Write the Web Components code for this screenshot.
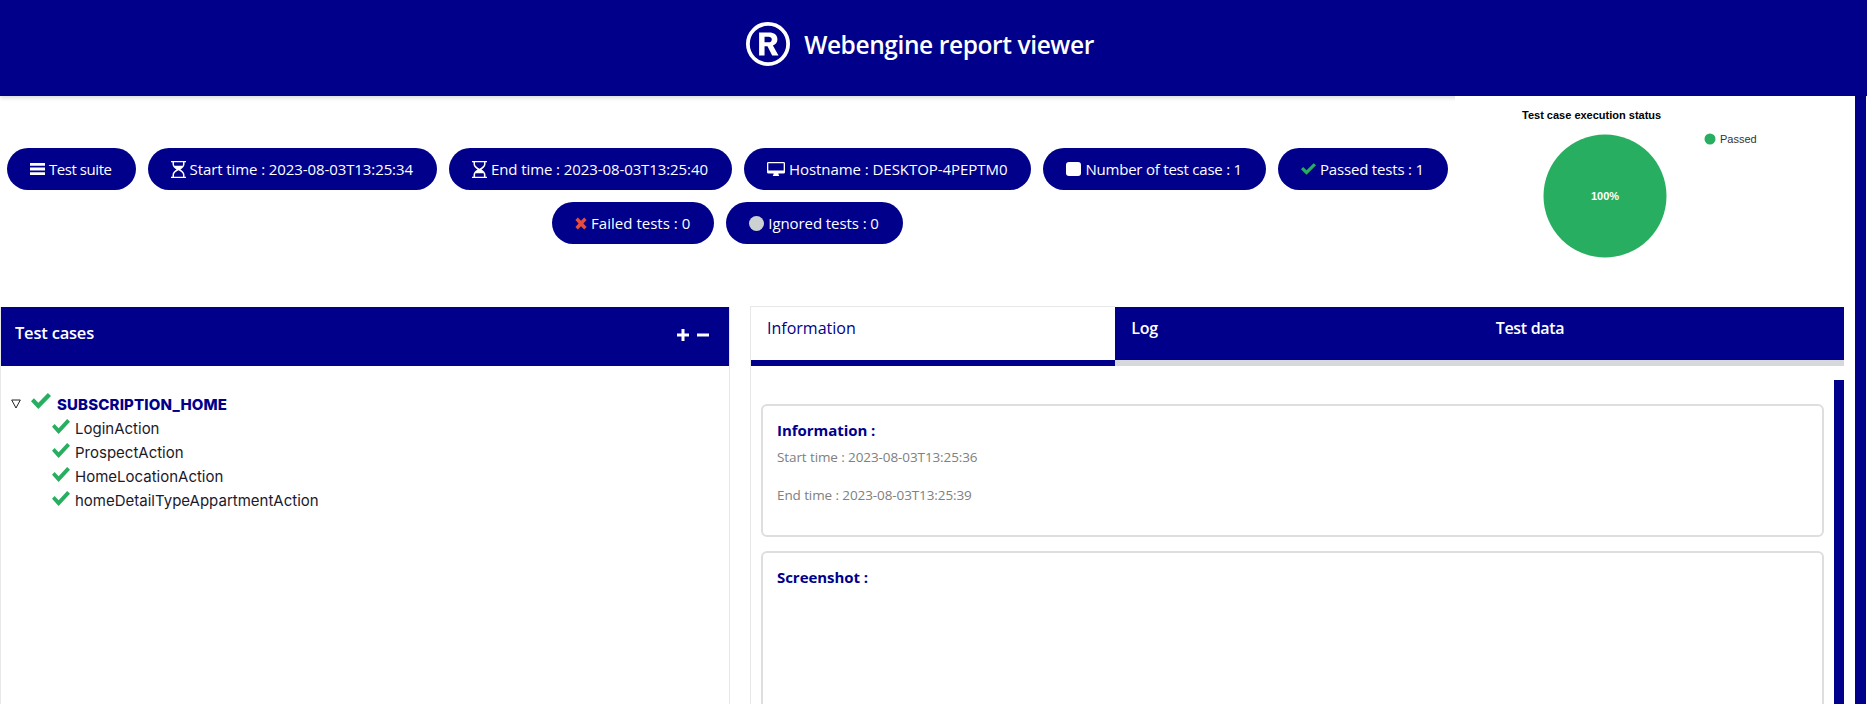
<!DOCTYPE html>
<html>
<head>
<meta charset="utf-8">
<title>Webengine report viewer</title>
<style>
html, body { margin: 0; height: 704px; overflow: hidden; background: #fff; font-family: "Open Sans", "Noto Sans", sans-serif; }
</style>
</head>
<body>
<report-app></report-app>

<script>
const NAVY = '#00008b';

const ICONS = {
    bars: `<svg width="15" height="12" viewBox="0 0 15 12"><path fill="#fff" d="M0 0h15v2.800H0zM0 4.600h15v2.800H0zM0 9.200h15V12H0z"/></svg>`,
    start: `<svg width="15" height="17" viewBox="0 0 14 20" preserveAspectRatio="none"><path fill="#fff" fill-rule="evenodd" d="M0 0h14v1.600h-1.400v2.200c0 2.600-1.900 4.700-3.800 6.200 1.900 1.500 3.800 3.600 3.800 6.200v2.200H14V20H0v-1.600h1.400v-2.200c0-2.600 1.900-4.700 3.800-6.200C3.300 8.500 1.400 6.400 1.400 3.800V1.600H0zM2.800 1.600v2.200c0 .6.100 1.100.3 1.700h7.800c.2-.6.300-1.100.3-1.700V1.600zM7 11c-2.100 1.500-4.200 3.300-4.200 5.200v2.200h8.400v-2.200c0-1.900-2.100-3.700-4.200-5.200z"/></svg>`,
    end: `<svg width="15" height="17" viewBox="0 0 14 20" preserveAspectRatio="none"><path fill="#fff" fill-rule="evenodd" d="M0 0h14v1.600h-1.400v2.200c0 2.600-1.900 4.700-3.800 6.200 1.900 1.500 3.800 3.600 3.800 6.200v2.200H14V20H0v-1.600h1.400v-2.200c0-2.600 1.900-4.700 3.800-6.200C3.300 8.500 1.400 6.400 1.400 3.800V1.600H0zM2.800 1.600v2.200c0 1.900 2.100 3.700 4.200 5.200 2.100-1.500 4.200-3.300 4.200-5.200V1.600zM2.900 18.400h8.200v-2.200c0-.6-.1-1.100-.3-1.700H3.200c-.2.600-.3 1.100-.3 1.700z"/></svg>`,
    desktop: `<svg width="18" height="15" viewBox="0 0 19 17" preserveAspectRatio="none"><path fill="#fff" fill-rule="evenodd" d="M1.500 0h16A1.500 1.500 0 0 1 19 1.500v10a1.500 1.500 0 0 1-1.500 1.500h-5.500c0 1 .4 1.700.8 2.200v.8H6.200v-.8c.4-.5.8-1.200.8-2.200H1.500A1.500 1.500 0 0 1 0 11.500v-10A1.500 1.500 0 0 1 1.500 0zM1.400 1.400v8.200h16.200V1.400z"/></svg>`,
    square: `<svg width="15" height="14" viewBox="0 0 15 14"><rect width="15" height="14" rx="3" fill="#fff"/></svg>`,
    check: `<svg width="15" height="12" viewBox="0 0 18 14"><path fill="#27ae60" d="M0 7.200 2.600 4.600 6.600 8.600 15.200 0 18 2.600 6.600 14z"/></svg>`,
    cross: `<svg width="12" height="13" viewBox="0 0 12 13"><path fill="#e74c3c" d="M2.800.6 6 3.800 9.200.6 11.600 3 8.400 6.500 11.600 10 9.200 12.400 6 9.200 2.800 12.400.4 10 3.600 6.500.4 3z"/></svg>`,
    circle: `<svg width="15" height="15" viewBox="0 0 15 15"><circle cx="7.500" cy="7.500" r="7.500" fill="#ccd1d1"/></svg>`
};

class ReportHeader extends HTMLElement {
    constructor() {
        super();
        this.attachShadow({ mode: 'open' });
        this.shadowRoot.innerHTML = `
        <style>
        :host {
            display: flex;
            align-items: center;
            justify-content: center;
            position: relative;
            height: 96px;
            padding: 0 27px 8px 0;
            box-sizing: border-box;
            background: ${NAVY};
            color: #fff;
            box-shadow: 0 2px 4px rgba(0,0,0,.15);
        }
        .logo {
            width: 44px;
            height: 44px;
            margin-right: 14px;
        }
        h1 {
            margin: 0;
            font: 600 24.500px "Open Sans", sans-serif;
            letter-spacing: -.4px;
        }
        </style>
        <svg class="logo" viewBox="0 0 42 42" aria-hidden="true">
            <circle cx="21" cy="21" r="19.200" fill="none" stroke="#fff" stroke-width="3.600"/>
            <path fill="#fff" fill-rule="evenodd" d="M12.500 10h9.500c5 0 8 2.500 8 6.500 0 3-1.700 5-4.300 5.900L31 32h-6l-4.500-8.800h-2.800V32h-5.200zM17.700 14v5.400h3.600c2 0 3.300-1 3.300-2.800 0-1.700-1.200-2.600-3.300-2.600z"/>
        </svg>
        <h1><slot></slot></h1>`;
    }
}
customElements.define('report-header', ReportHeader);

class StatusPill extends HTMLElement {
    constructor() {
        super();
        this.attachShadow({ mode: 'open' });
        const icon = ICONS[this.getAttribute('icon')] || '';
        this.shadowRoot.innerHTML = `
        <style>
        :host {
            display: inline-flex;
            align-items: center;
            justify-content: center;
            gap: 4px;
            height: 42px;
            padding: 0 24px 0 23px;
            box-sizing: border-box;
            border-radius: 21px;
            background: ${NAVY};
            color: #fff;
            font: 15px "Open Sans", sans-serif;
            letter-spacing: -.09px;
            white-space: nowrap;
        }
        svg { display: block; flex: none; }
        </style>
        ${icon}<slot></slot>`;
    }
}
customElements.define('status-pill', StatusPill);

class StatusChart extends HTMLElement {
    constructor() {
        super();
        this.attachShadow({ mode: 'open' });
        this.shadowRoot.innerHTML = `
        <style>
        :host {
            display: block;
            position: relative;
            width: 400px;
            flex: none;
            background: #fff;
        }
        svg { display: block; }
        text { font-family: "Liberation Sans", Arial, sans-serif; }
        </style>
        <svg width="400" height="211" viewBox="0 0 400 211">
            <text x="67" y="23" font-size="11" font-weight="700" fill="#000">Test case execution status</text>
            <circle cx="150" cy="100" r="61.500" fill="#27ae60"/>
            <text x="150" y="104" font-size="11" font-weight="700" fill="#fff" text-anchor="middle">100%</text>
            <circle cx="255" cy="43" r="5.500" fill="#27ae60"/>
            <text x="265" y="47" font-size="11" fill="#333">Passed</text>
        </svg>`;
    }
}
customElements.define('status-chart', StatusChart);

class ReportSummary extends HTMLElement {
    constructor() {
        super();
        this.attachShadow({ mode: 'open' });
        this.shadowRoot.innerHTML = `
        <style>
        :host {
            display: flex;
            height: 211px;
        }
        .pills {
            flex: 1;
            display: flex;
            flex-wrap: wrap;
            justify-content: center;
            align-content: flex-start;
            gap: 12px;
            padding: 52px 7px 0;
        }
        </style>
        <div class="pills"><slot></slot></div>
        <status-chart></status-chart>`;
    }
}
customElements.define('report-summary', ReportSummary);

class TreeNode extends HTMLElement {
    constructor() {
        super();
        this.attachShadow({ mode: 'open' });
        this.shadowRoot.innerHTML = `
        <style>
        :host {
            display: flex;
            align-items: center;
            gap: 6px;
            height: 24px;
            padding-left: 51px;
            font: 15px Inter, sans-serif;
            color: #1a1a2a;
        }
        :host([root]) {
            padding-left: 10px;
            gap: 0;
            font-size: 15px;
            font-weight: 800;
            color: ${NAVY};
            letter-spacing: .15px;
        }
        .tri { display: none; margin-right: 10px; }
        :host([root]) .tri { display: block; }
        .check { width: 18px; height: 15px; margin-top: -4px; margin-right: -1px; }
        :host([root]) .check { width: 20px; height: 16px; margin-right: 6px; margin-top: -6px; }
        </style>
        <svg class="tri" width="10" height="10" viewBox="0 0 10 10"><path d="M.7 1h8.600L5 9z" fill="none" stroke="#222" stroke-width="1"/></svg>
        <svg class="check" viewBox="0 0 18 14" preserveAspectRatio="none"><path fill="#27ae60" d="M0 7.200 2.600 4.600 6.600 8.600 15.200 0 18 2.600 6.600 14z"/></svg>
        <slot></slot>`;
    }
}
customElements.define('tree-node', TreeNode);

class CasesPanel extends HTMLElement {
    constructor() {
        super();
        this.attachShadow({ mode: 'open' });
        this.shadowRoot.innerHTML = `
        <style>
        :host {
            display: block;
            width: 730px;
            flex: none;
            box-sizing: border-box;
            border-left: 1px solid #e8e8e8;
            border-right: 1px solid #e8e8e8;
        }
        .head {
            display: flex;
            align-items: center;
            justify-content: space-between;
            height: 59px;
            padding: 0 20px 8px 14px;
            box-sizing: border-box;
            background: ${NAVY};
            color: #fff;
            font: 600 16.500px "Open Sans", sans-serif;
            letter-spacing: -.2px;
        }
        .tools { display: flex; gap: 8px; margin-top: 5px; }
        .tools svg { display: block; }
        .tree { padding-top: 26px; }
        </style>
        <div class="head">
            <span>Test cases</span>
            <div class="tools">
                <svg width="12" height="12" viewBox="0 0 12 12"><path fill="#fff" d="M4.500 0h3v4.500H12v3H7.500V12h-3V7.500H0v-3h4.500z"/></svg>
                <svg width="12" height="12" viewBox="0 0 12 12"><path fill="#fff" d="M0 4.500h12v3H0z"/></svg>
            </div>
        </div>
        <div class="tree"><slot></slot></div>`;
    }
}
customElements.define('cases-panel', CasesPanel);

class InfoCard extends HTMLElement {
    constructor() {
        super();
        this.attachShadow({ mode: 'open' });
        this.shadowRoot.innerHTML = `
        <style>
        :host {
            display: block;
            box-sizing: border-box;
            border: 2px solid #dedede;
            border-radius: 6px;
            padding: 14px 14px 0 14px;
            color: #808080;
            font: 13.500px "Open Sans", sans-serif;
            letter-spacing: -.1px;
        }
        h3 {
            margin: 0 0 8px;
            font: 700 15px/20px "Open Sans", sans-serif;
            color: ${NAVY};
            letter-spacing: -.05px;
        }
        </style>
        <h3></h3>
        <slot></slot>`;
        this.shadowRoot.querySelector('h3').textContent = this.getAttribute('heading');
    }
}
customElements.define('info-card', InfoCard);

class DetailPanel extends HTMLElement {
    constructor() {
        super();
        this.attachShadow({ mode: 'open' });
        this.shadowRoot.innerHTML = `
        <style>
        :host {
            display: block;
            width: 1094px;
            flex: none;
            box-sizing: border-box;
            border-left: 1px solid #e8e8e8;
            margin-top: -1px;
        }
        .tabs {
            display: grid;
            grid-template-columns: repeat(3, 1fr);
            height: 60px;
            font: 16px "Open Sans", sans-serif;
        }
        .tab {
            box-sizing: border-box;
            padding: 10px 16px 0;
            background: ${NAVY};
            color: #fff;
            font-weight: 600;
            letter-spacing: -.3px;
            border-bottom: 6px solid #d6d8db;
            margin-top: 1px;
            height: 59px;
        }
        .tab.on {
            margin-top: 0;
            height: 60px;
            padding-top: 10px;
            background: #fff;
            color: ${NAVY};
            font-weight: 400;
            letter-spacing: 0;
            border-top: 1px solid #e8e8e8;
            border-bottom-color: ${NAVY};
        }
        .body { display: flex; }
        .cards {
            flex: 1;
            display: flex;
            flex-direction: column;
            gap: 14px;
            padding: 38px 10px 0 10px;
        }
        .bar {
            width: 10px;
            height: 340px;
            margin-top: 14px;
            background: ${NAVY};
            flex: none;
        }
        </style>
        <div class="tabs">
            <div class="tab on">Information</div>
            <div class="tab">Log</div>
            <div class="tab">Test data</div>
        </div>
        <div class="body">
            <div class="cards"><slot></slot></div>
            <div class="bar"></div>
        </div>`;
    }
}
customElements.define('detail-panel', DetailPanel);

class ReportApp extends HTMLElement {
    constructor() {
        super();
        this.attachShadow({ mode: 'open' });
        this.shadowRoot.innerHTML = `
        <style>
        :host { display: block; height: 704px; overflow: hidden; }
        .page { display: flex; }
        .content { width: 1855px; flex: none; }
        .scroll { width: 11px; height: 608px; background: ${NAVY}; flex: none; }
        .main { display: flex; gap: 20px; }
        p { margin: 0 0 20px; line-height: 18px; }
        </style>
        <report-header>Webengine report viewer</report-header>
        <div class="page">
            <div class="content">
                <report-summary>
                    <status-pill icon="bars" style="letter-spacing:-.45px">Test suite</status-pill>
                    <status-pill icon="start">Start time : 2023-08-03T13:25:34</status-pill>
                    <status-pill icon="end">End time : 2023-08-03T13:25:40</status-pill>
                    <status-pill icon="desktop" style="letter-spacing:-.05px">Hostname : DESKTOP-4PEPTM0</status-pill>
                    <status-pill icon="square" style="letter-spacing:-.22px">Number of test case : 1</status-pill>
                    <status-pill icon="check" style="letter-spacing:-.18px">Passed tests : 1</status-pill>
                    <status-pill icon="cross" style="letter-spacing:.02px">Failed tests : 0</status-pill>
                    <status-pill icon="circle" style="letter-spacing:-.08px">Ignored tests : 0</status-pill>
                </report-summary>
                <div class="main">
                    <cases-panel>
                        <tree-node root>SUBSCRIPTION_HOME</tree-node>
                        <tree-node>LoginAction</tree-node>
                        <tree-node>ProspectAction</tree-node>
                        <tree-node>HomeLocationAction</tree-node>
                        <tree-node>homeDetailTypeAppartmentAction</tree-node>
                    </cases-panel>
                    <detail-panel>
                        <info-card heading="Information :" style="height:133px">
                            <p>Start time : 2023-08-03T13:25:36</p>
                            <p>End time : 2023-08-03T13:25:39</p>
                        </info-card>
                        <info-card heading="Screenshot :" style="height:260px"></info-card>
                    </detail-panel>
                </div>
            </div>
            <div class="scroll"></div>
        </div>`;
    }
}
customElements.define('report-app', ReportApp);
</script>
</body>
</html>
